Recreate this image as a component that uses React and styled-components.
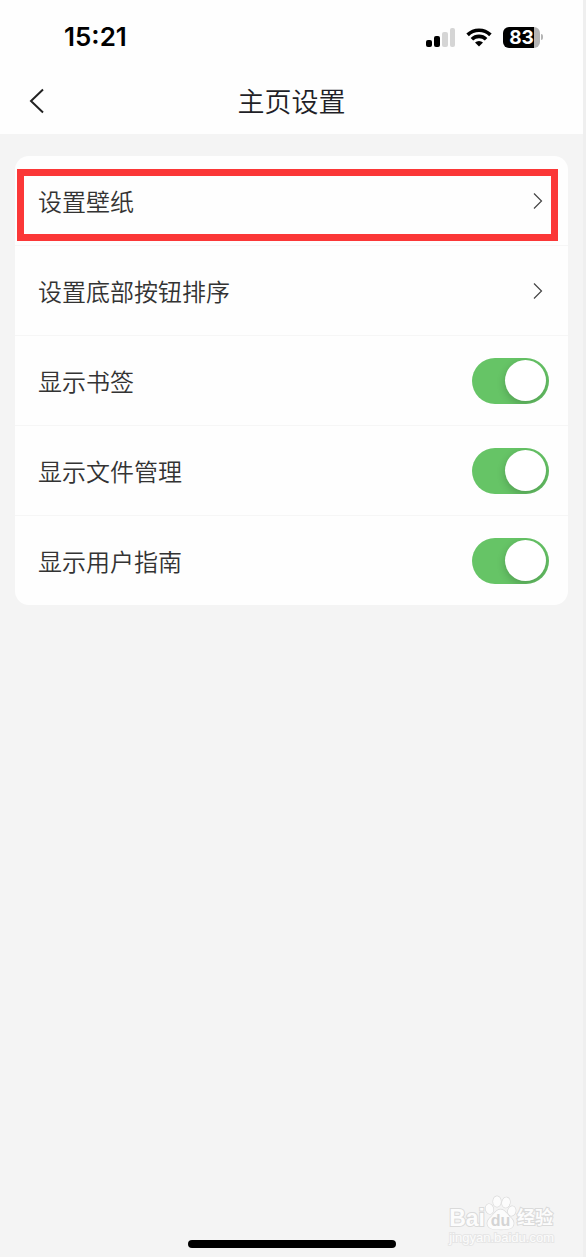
import React, { useState } from "react";
import styled, { createGlobalStyle } from "styled-components";

const GlobalStyle = createGlobalStyle`
  * {
    box-sizing: border-box;
  }
  body {
    margin: 0;
    background: #f4f4f4;
    font-family: "Noto Sans CJK SC", sans-serif;
    font-weight: 350;
  }
`;

const Screen = styled.div`
  position: relative;
  display: flex;
  flex-direction: column;
  min-height: 100vh;
  border-right: 3px solid #efefef;
  background: #f4f4f4;
`;

const Top = styled.header`
  background: #fefefe;
`;

const StatusBar = styled.div`
  display: flex;
  align-items: center;
  justify-content: space-between;
  height: 68px;
  padding: 6px 40px 0 64px;
`;

const Time = styled.span`
  font: 600 26px/30px Inter, sans-serif;
  color: #000;
`;

const StatusIcons = styled.div`
  display: flex;
  align-items: center;
  gap: 11px;
`;

const Battery = styled.div`
  display: flex;
  align-items: center;
  gap: 1px;
`;

const BatteryLevel = styled.span`
  width: 37px;
  border-radius: 6px;
  background: linear-gradient(to right, #000 83%, #b4b4b4 83%);
  color: #fff;
  font: 700 19px/21px Inter, sans-serif;
  text-align: center;
`;

const BatteryTip = styled.span`
  width: 2px;
  height: 6px;
  border-radius: 0 2px 2px 0;
  background: #b4b4b4;
`;

const NavBar = styled.div`
  display: grid;
  grid-template-columns: 60px 1fr 60px;
  align-items: center;
  height: 66px;
`;

const BackButton = styled.button`
  display: flex;
  padding: 0 0 0 28px;
  border: none;
  background: none;
`;

const Title = styled.h1`
  margin: 0;
  color: #1f1f27;
  font-size: 27px;
  font-weight: 350;
  line-height: 40px;
  text-align: center;
`;

const Card = styled.ul`
  margin: 22px 15px 0;
  padding: 0;
  list-style: none;
  border-radius: 14px;
  background: #fefefe;
`;

const Item = styled.li`
  position: relative;
  border-bottom: 1px solid #f6f6f6;

  &:last-child {
    border-bottom: none;
  }
`;

const LinkRow = styled.button`
  display: flex;
  align-items: center;
  justify-content: space-between;
  width: 100%;
  height: 89px;
  padding: 0 24px 0 23px;
  border: none;
  background: none;
  color: #333;
  font: inherit;
  font-size: 24px;
`;

const SwitchRow = styled.label`
  display: flex;
  align-items: center;
  justify-content: space-between;
  height: 89px;
  padding: 0 19px 0 23px;
  color: #333;
  font-size: 24px;
`;

const Switch = styled.input`
  appearance: none;
  display: flex;
  align-items: center;
  width: 77px;
  height: 46px;
  margin: 0;
  padding: 0 3px;
  border-radius: 23px;
  background: #ddd;
  overflow: hidden;

  &::after {
    content: "";
    width: 41px;
    height: 41px;
    border-radius: 50%;
    background: #fff;
    box-shadow: 0 3px 8px rgba(0, 0, 0, 0.2);
  }

  &:checked {
    justify-content: flex-end;
    background: #66c466;
  }
`;

const Highlight = styled.div`
  position: absolute;
  top: 13px;
  right: 10px;
  bottom: 4px;
  left: 2px;
  border: 7px solid #fb3737;
  pointer-events: none;
`;

const HomeIndicator = styled.div`
  width: 208px;
  height: 8px;
  margin: auto auto 9px;
  border-radius: 4px;
  background: #000;
`;

const Watermark = styled.div`
  position: absolute;
  right: 29px;
  bottom: 12px;
  color: #fcfcfc;
  font-family: "Liberation Sans", "Noto Sans CJK SC", sans-serif;
  font-weight: 700;
  -webkit-text-stroke: 2px #dadada;
  paint-order: stroke fill;
`;

const Brand = styled.div`
  display: flex;
  align-items: flex-end;
  font-size: 23px;
  line-height: 26px;
`;

const BrandSuffix = styled.span`
  font-size: 18px;
`;

const Site = styled.div`
  font-size: 13px;
  font-weight: 400;
  line-height: 14px;
  -webkit-text-stroke: 2px #e6e6e6;
`;

const PawText = styled.text`
  fill: #d4d4d4;
  font-size: 16px;
  -webkit-text-stroke: 0;
`;

const SignalIcon = () => (
  <svg width="29" height="19" viewBox="0 0 29 19">
    <rect x="0" y="12" width="6" height="7" rx="2" fill="#000" />
    <rect x="8" y="8" width="6" height="11" rx="2" fill="#000" />
    <rect x="16" y="4" width="6" height="15" rx="2" fill="#d5d5d5" />
    <rect x="24" y="0" width="5" height="19" rx="2" fill="#d5d5d5" />
  </svg>
);

const WifiIcon = () => (
  <svg width="26" height="19" viewBox="0 0 26 19">
    <g fill="none" stroke="#000" strokeWidth="3.6">
      <path d="M1.6 6.9a16.2 16.2 0 0 1 22.8 0" />
      <path d="M5.9 11.3a10.1 10.1 0 0 1 14.2 0" />
    </g>
    <path d="M13 18.6l-4-4.1a5.8 5.8 0 0 1 8 0z" fill="#000" />
  </svg>
);

const BackIcon = () => (
  <svg width="17" height="26" viewBox="0 0 17 26">
    <path d="M15 1.5L3 13l12 11.5" fill="none" stroke="#222" strokeWidth="2" />
  </svg>
);

const ArrowIcon = () => (
  <svg width="12" height="18" viewBox="0 0 12 18">
    <path d="M2 1.5L9.5 9 2 16.5" fill="none" stroke="#444" strokeWidth="1.2" />
  </svg>
);

const PawIcon = () => (
  <svg width="32" height="36" viewBox="1 0 32 36">
    <g fill="#fcfcfc" stroke="#dadada" strokeWidth="1.3">
      <ellipse cx="5.5" cy="14" rx="3.8" ry="5" transform="rotate(-12 5.5 14)" />
      <ellipse cx="13" cy="6.5" rx="3.9" ry="5.3" />
      <ellipse cx="22" cy="7.5" rx="3.9" ry="5.2" transform="rotate(12 22 7.5)" />
      <ellipse cx="27.8" cy="16" rx="3.8" ry="4.8" transform="rotate(15 27.8 16)" />
      <path d="M16.5 14.5c4 0 6.5 4.5 9.5 7.5 3.5 3 4.5 6 3 9-1.5 3-5 3.5-12 3.5s-11.5-.5-13-3.5c-1.5-3-.5-6 3-9 3-3 5.5-7.5 9.5-7.5z" />
    </g>
    <PawText x="16.5" y="31" textAnchor="middle">
      du
    </PawText>
  </svg>
);

const links = ["设置壁纸", "设置底部按钮排序"];
const switches = ["显示书签", "显示文件管理", "显示用户指南"];

function App() {
  const [shown, setShown] = useState([true, true, true]);

  const toggle = (index) =>
    setShown(shown.map((value, i) => (i === index ? !value : value)));

  return (
    <>
      <GlobalStyle />
      <Screen>
        <Top>
          <StatusBar>
            <Time>15:21</Time>
            <StatusIcons>
              <SignalIcon />
              <WifiIcon />
              <Battery>
                <BatteryLevel>83</BatteryLevel>
                <BatteryTip />
              </Battery>
            </StatusIcons>
          </StatusBar>
          <NavBar>
            <BackButton aria-label="返回">
              <BackIcon />
            </BackButton>
            <Title>主页设置</Title>
          </NavBar>
        </Top>
        <Card>
          {links.map((name, i) => (
            <Item key={name}>
              <LinkRow>
                {name}
                <ArrowIcon />
              </LinkRow>
              {i === 0 && <Highlight />}
            </Item>
          ))}
          {switches.map((name, i) => (
            <Item key={name}>
              <SwitchRow>
                {name}
                <Switch
                  type="checkbox"
                  checked={shown[i]}
                  onChange={() => toggle(i)}
                />
              </SwitchRow>
            </Item>
          ))}
        </Card>
        <HomeIndicator />
        <Watermark>
          <Brand>
            Bai
            <PawIcon />
            <BrandSuffix>经验</BrandSuffix>
          </Brand>
          <Site>jingyan.baidu.com</Site>
        </Watermark>
      </Screen>
    </>
  );
}

export default App;
